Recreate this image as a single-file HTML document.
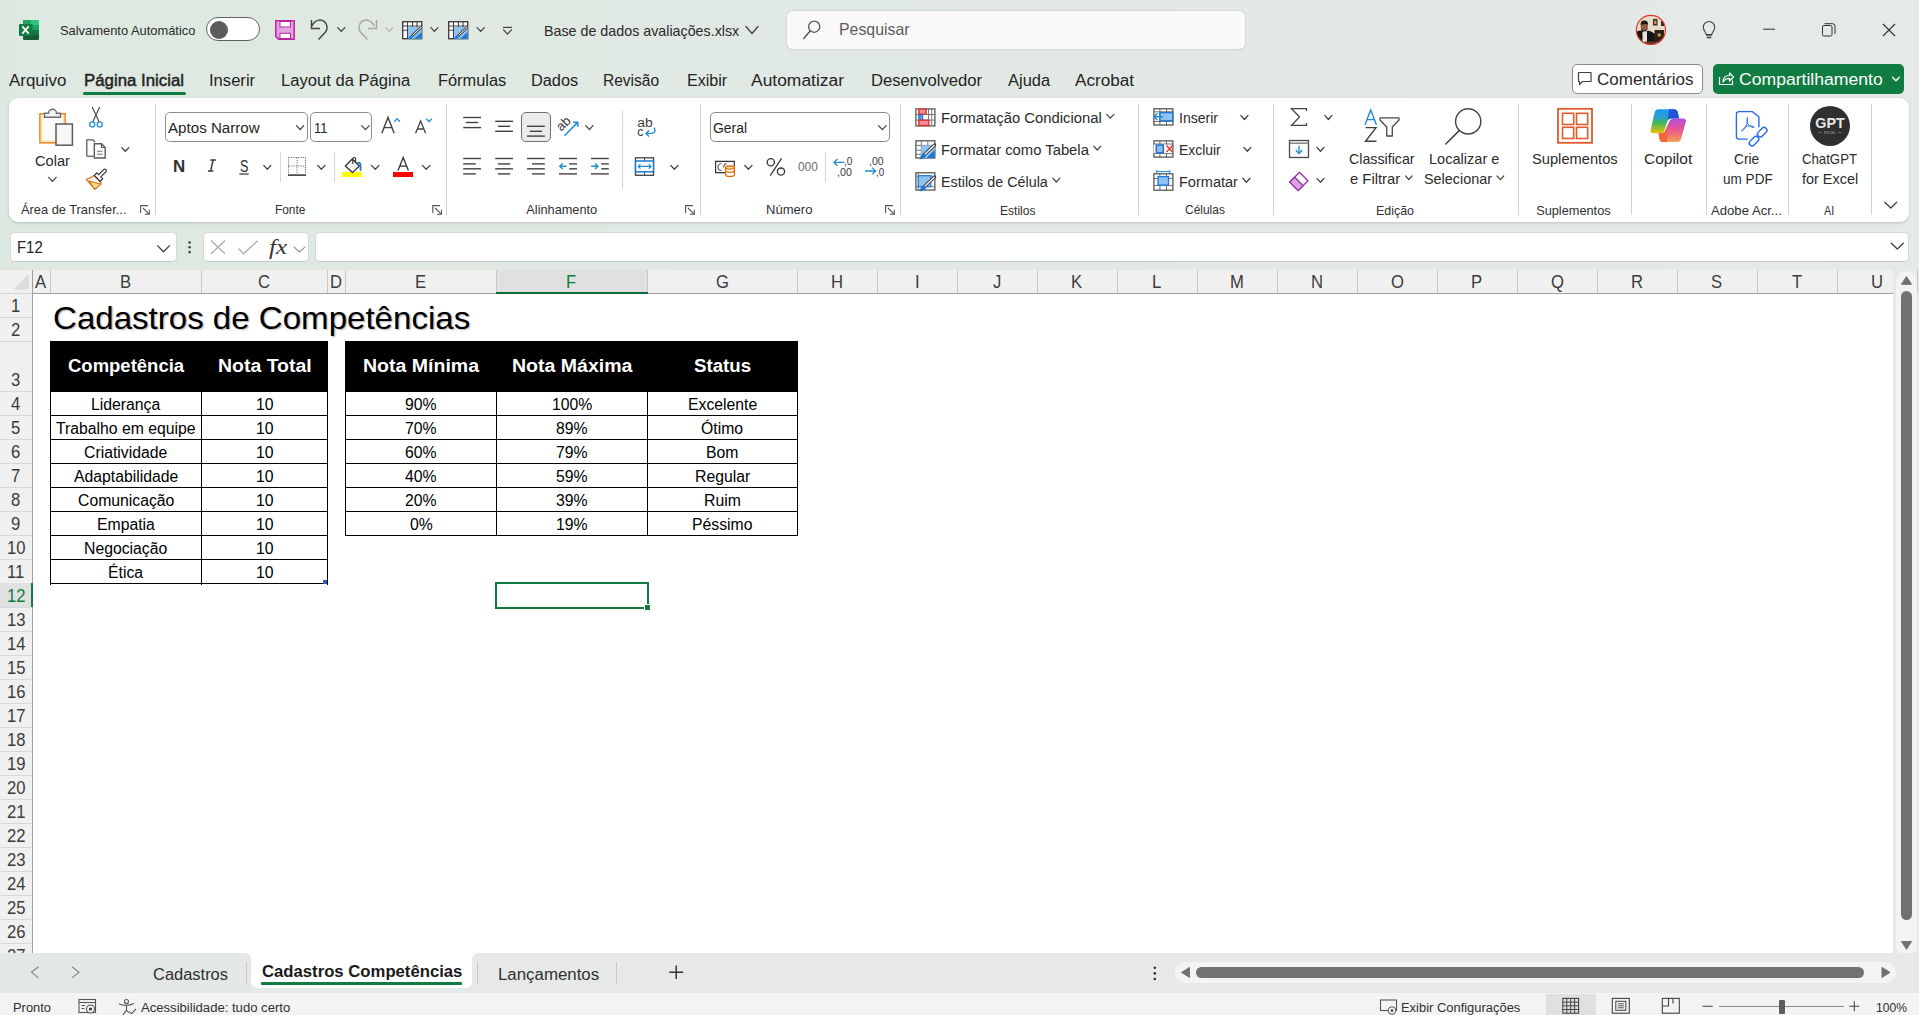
<!DOCTYPE html><html><head><meta charset="utf-8"><style>
html,body{margin:0;padding:0;}
body{width:1919px;height:1015px;position:relative;overflow:hidden;background:linear-gradient(90deg,#dde9e0 0%,#e0e9e3 35%,#e3e9e6 70%,#e5e9e8 100%);font-family:"Liberation Sans",sans-serif;}
.a{position:absolute;}
.t{position:absolute;white-space:pre;transform-origin:0 0;}
svg{overflow:visible}
</style></head><body>
<span class="t" style="left:60.40px;top:24.00px;font-size:13.3px;line-height:13.3px;color:#2b2b2b;transform:scaleX(0.9690);">Salvamento Automático</span>
<div class="a" style="left:206px;top:17px;width:54px;height:24px;box-sizing:border-box;border:1px solid #5f5f5f;border-radius:12px;background:#fff;"></div>
<div class="a" style="left:210px;top:20.5px;width:18px;height:18px;border-radius:50%;background:#5c5c5c;"></div>
<span class="t" style="left:543.75px;top:23.00px;font-size:15px;line-height:15px;color:#2b2b2b;transform:scaleX(0.9519);">Base de dados avaliações.xlsx</span>
<div class="a" style="left:787px;top:11px;width:458px;height:38px;box-sizing:border-box;background:#fafafa;border-radius:6px;box-shadow:0 0 0 1px #d6d9d8,0 1px 1px #c9cccb;"></div>
<span class="t" style="left:839.00px;top:21.00px;font-size:16.5px;line-height:16.5px;color:#5c5c5c;transform:scaleX(0.9622);">Pesquisar</span>
<span class="t" style="left:9.00px;top:73.00px;font-size:16px;line-height:16px;color:#242424;transform:scaleX(1.0579);">Arquivo</span>
<span class="t" style="left:83.60px;top:73.00px;font-size:16px;line-height:16px;color:#242424;transform:scaleX(1.0508);-webkit-text-stroke:0.45px #242424;">Página Inicial</span>
<span class="t" style="left:208.60px;top:73.00px;font-size:16px;line-height:16px;color:#242424;transform:scaleX(1.0372);">Inserir</span>
<span class="t" style="left:280.80px;top:73.00px;font-size:16px;line-height:16px;color:#242424;transform:scaleX(1.0373);">Layout da Página</span>
<span class="t" style="left:437.50px;top:73.00px;font-size:16px;line-height:16px;color:#242424;transform:scaleX(1.0242);">Fórmulas</span>
<span class="t" style="left:530.50px;top:73.00px;font-size:16px;line-height:16px;color:#242424;transform:scaleX(1.0204);">Dados</span>
<span class="t" style="left:603.40px;top:73.00px;font-size:16px;line-height:16px;color:#242424;transform:scaleX(0.9687);">Revisão</span>
<span class="t" style="left:686.70px;top:73.00px;font-size:16px;line-height:16px;color:#242424;transform:scaleX(1.0046);">Exibir</span>
<span class="t" style="left:751.40px;top:73.00px;font-size:16px;line-height:16px;color:#242424;transform:scaleX(1.0895);">Automatizar</span>
<span class="t" style="left:870.60px;top:73.00px;font-size:16px;line-height:16px;color:#242424;transform:scaleX(1.0401);">Desenvolvedor</span>
<span class="t" style="left:1007.70px;top:73.00px;font-size:16px;line-height:16px;color:#242424;transform:scaleX(1.0286);">Ajuda</span>
<span class="t" style="left:1075.30px;top:73.00px;font-size:16px;line-height:16px;color:#242424;transform:scaleX(1.0683);">Acrobat</span>
<div class="a" style="left:83px;top:92px;width:103px;height:3px;background:#107c41;border-radius:2px;"></div>
<div class="a" style="left:1572px;top:64px;width:131px;height:30px;box-sizing:border-box;border:1px solid #8a8a8a;border-radius:5px;background:#fff;"></div>
<span class="t" style="left:1597.40px;top:72.00px;font-size:16px;line-height:16px;color:#2b2b2b;transform:scaleX(1.0628);">Comentários</span>
<div class="a" style="left:1713px;top:64px;width:191px;height:30px;border-radius:5px;background:#107c41;"></div>
<span class="t" style="left:1739.00px;top:72.00px;font-size:16px;line-height:16px;color:#ffffff;transform:scaleX(1.0993);">Compartilhamento</span>
<div class="a" style="left:9px;top:98px;width:1900px;height:124px;background:#fff;border-radius:9px;box-shadow:0 1px 3px rgba(0,0,0,0.18);"></div>
<div class="a" style="left:154.5px;top:104px;width:1px;height:111px;background:#d1d1d1;"></div>
<div class="a" style="left:446.4px;top:104px;width:1px;height:111px;background:#d1d1d1;"></div>
<div class="a" style="left:699.6px;top:104px;width:1px;height:111px;background:#d1d1d1;"></div>
<div class="a" style="left:899.6px;top:104px;width:1px;height:111px;background:#d1d1d1;"></div>
<div class="a" style="left:1137.6px;top:104px;width:1px;height:111px;background:#d1d1d1;"></div>
<div class="a" style="left:1273.3px;top:104px;width:1px;height:111px;background:#d1d1d1;"></div>
<div class="a" style="left:1518.2px;top:104px;width:1px;height:111px;background:#d1d1d1;"></div>
<div class="a" style="left:1630.5px;top:104px;width:1px;height:111px;background:#d1d1d1;"></div>
<div class="a" style="left:1705.6px;top:104px;width:1px;height:111px;background:#d1d1d1;"></div>
<div class="a" style="left:1788.4px;top:104px;width:1px;height:111px;background:#d1d1d1;"></div>
<div class="a" style="left:1871.3px;top:104px;width:1px;height:111px;background:#d1d1d1;"></div>
<span class="t" style="left:20.50px;top:204.00px;font-size:12.75px;line-height:12.75px;color:#303030;transform:scaleX(1.0058);">Área de Transfer...</span>
<span class="t" style="left:274.80px;top:204.00px;font-size:12.75px;line-height:12.75px;color:#303030;transform:scaleX(0.9325);">Fonte</span>
<span class="t" style="left:526.30px;top:204.00px;font-size:12.75px;line-height:12.75px;color:#303030;">Alinhamento</span>
<span class="t" style="left:765.60px;top:204.00px;font-size:12.75px;line-height:12.75px;color:#303030;transform:scaleX(1.0231);">Número</span>
<span class="t" style="left:999.90px;top:205.00px;font-size:12.75px;line-height:12.75px;color:#303030;transform:scaleX(0.9454);">Estilos</span>
<span class="t" style="left:1184.70px;top:204.00px;font-size:12.75px;line-height:12.75px;color:#303030;transform:scaleX(0.9384);">Células</span>
<span class="t" style="left:1376.30px;top:205.00px;font-size:12.75px;line-height:12.75px;color:#303030;transform:scaleX(0.9746);">Edição</span>
<span class="t" style="left:1536.20px;top:205.00px;font-size:12.75px;line-height:12.75px;color:#303030;">Suplementos</span>
<span class="t" style="left:1710.60px;top:205.00px;font-size:12.75px;line-height:12.75px;color:#303030;transform:scaleX(1.0297);">Adobe Acr...</span>
<span class="t" style="left:1824.30px;top:205.00px;font-size:12.75px;line-height:12.75px;color:#303030;transform:scaleX(0.8466);">AI</span>
<span class="t" style="left:35.00px;top:153.00px;font-size:15.5px;line-height:15.5px;color:#2b2b2b;transform:scaleX(0.9448);">Colar</span>
<span class="t" style="left:1349.40px;top:151.00px;font-size:15px;line-height:15px;color:#2b2b2b;transform:scaleX(0.9483);">Classificar</span>
<span class="t" style="left:1350.00px;top:171.00px;font-size:15px;line-height:15px;color:#2b2b2b;transform:scaleX(0.9875);">e Filtrar</span>
<span class="t" style="left:1429.40px;top:151.00px;font-size:15px;line-height:15px;color:#2b2b2b;transform:scaleX(0.9705);">Localizar e</span>
<span class="t" style="left:1423.60px;top:171.00px;font-size:15px;line-height:15px;color:#2b2b2b;transform:scaleX(0.9594);">Selecionar</span>
<span class="t" style="left:1532.30px;top:151.00px;font-size:15px;line-height:15px;color:#2b2b2b;transform:scaleX(0.9788);">Suplementos</span>
<span class="t" style="left:1644.30px;top:151.00px;font-size:15px;line-height:15px;color:#2b2b2b;transform:scaleX(1.0322);">Copilot</span>
<span class="t" style="left:1734.20px;top:151.00px;font-size:15px;line-height:15px;color:#2b2b2b;transform:scaleX(0.9197);">Crie</span>
<span class="t" style="left:1722.60px;top:171.00px;font-size:15px;line-height:15px;color:#2b2b2b;transform:scaleX(0.9036);">um PDF</span>
<span class="t" style="left:1802.40px;top:151.00px;font-size:15px;line-height:15px;color:#2b2b2b;transform:scaleX(0.8797);">ChatGPT</span>
<span class="t" style="left:1802.40px;top:171.00px;font-size:15px;line-height:15px;color:#2b2b2b;transform:scaleX(0.9632);">for Excel</span>
<span class="t" style="left:940.60px;top:110.00px;font-size:15.5px;line-height:15.5px;color:#2b2b2b;transform:scaleX(0.9577);">Formatação Condicional</span>
<span class="t" style="left:940.60px;top:142.00px;font-size:15.5px;line-height:15.5px;color:#2b2b2b;transform:scaleX(0.9554);">Formatar como Tabela</span>
<span class="t" style="left:940.60px;top:174.00px;font-size:15.5px;line-height:15.5px;color:#2b2b2b;transform:scaleX(0.9250);">Estilos de Célula</span>
<span class="t" style="left:1178.75px;top:110.00px;font-size:15.5px;line-height:15.5px;color:#2b2b2b;transform:scaleX(0.9069);">Inserir</span>
<span class="t" style="left:1179.00px;top:142.00px;font-size:15.5px;line-height:15.5px;color:#2b2b2b;transform:scaleX(0.8965);">Excluir</span>
<span class="t" style="left:1179.00px;top:174.00px;font-size:15.5px;line-height:15.5px;color:#2b2b2b;transform:scaleX(0.9369);">Formatar</span>
<div class="a" style="left:165px;top:112px;width:143px;height:30px;box-sizing:border-box;border:1px solid #8d8d8d;border-radius:5px;background:#fff;"></div>
<div class="a" style="left:310px;top:112px;width:62px;height:30px;box-sizing:border-box;border:1px solid #8d8d8d;border-radius:5px;background:#fff;"></div>
<div class="a" style="left:710px;top:112px;width:180px;height:30px;box-sizing:border-box;border:1px solid #8d8d8d;border-radius:5px;background:#fff;"></div>
<span class="t" style="left:168.30px;top:120.00px;font-size:15.5px;line-height:15.5px;color:#242424;transform:scaleX(0.9763);">Aptos Narrow</span>
<span class="t" style="left:314.00px;top:120.00px;font-size:15.5px;line-height:15.5px;color:#242424;transform:scaleX(0.8329);">11</span>
<span class="t" style="left:713.20px;top:120.00px;font-size:15.5px;line-height:15.5px;color:#242424;transform:scaleX(0.8998);">Geral</span>
<div class="a" style="left:9.5px;top:232px;width:167px;height:30px;box-sizing:border-box;background:#fff;border-radius:5px;border:1px solid #d5d8d7;border-bottom-color:#c5c8c7;"></div>
<span class="t" style="left:16.80px;top:239.00px;font-size:16.5px;line-height:16.5px;color:#242424;transform:scaleX(0.9040);">F12</span>
<div class="a" style="left:202.5px;top:232px;width:106px;height:30px;box-sizing:border-box;background:#fff;border-radius:5px;border:1px solid #d5d8d7;border-bottom-color:#c5c8c7;"></div>
<div class="a" style="left:314.5px;top:232px;width:1594px;height:30px;box-sizing:border-box;background:#fff;border-radius:5px;border:1px solid #d5d8d7;border-bottom-color:#c5c8c7;"></div>
<div class="a" style="left:0px;top:270px;width:1893px;height:683px;background:#fff;"></div>
<div class="a" style="left:0px;top:270px;width:1893px;height:23px;background:#f0f0f0;"></div>
<div class="a" style="left:0px;top:293px;width:32px;height:660px;background:#f0f0f0;"></div>
<div class="a" style="left:0px;top:293px;width:32px;height:1px;background:#d4d4d4;"></div>
<div class="a" style="left:32px;top:293px;width:1861px;height:1px;background:#a0a0a0;"></div>
<div class="a" style="left:32px;top:270px;width:1px;height:683px;background:#a0a0a0;"></div>
<div class="a" style="left:496px;top:270px;width:151px;height:23px;background:#e0e0e0;"></div>
<div class="a" style="left:50px;top:270px;width:1px;height:23px;background:#c8c8c8;"></div>
<span class="t" style="left:35.45px;top:273.00px;font-size:18.5px;line-height:18.5px;color:#3c3c3c;transform:scaleX(0.9000);">A</span>
<div class="a" style="left:201px;top:270px;width:1px;height:23px;background:#c8c8c8;"></div>
<span class="t" style="left:119.95px;top:273.00px;font-size:18.5px;line-height:18.5px;color:#3c3c3c;transform:scaleX(0.9000);">B</span>
<div class="a" style="left:327px;top:270px;width:1px;height:23px;background:#c8c8c8;"></div>
<span class="t" style="left:257.99px;top:273.00px;font-size:18.5px;line-height:18.5px;color:#3c3c3c;transform:scaleX(0.9000);">C</span>
<div class="a" style="left:345px;top:270px;width:1px;height:23px;background:#c8c8c8;"></div>
<span class="t" style="left:329.99px;top:273.00px;font-size:18.5px;line-height:18.5px;color:#3c3c3c;transform:scaleX(0.9000);">D</span>
<div class="a" style="left:496px;top:270px;width:1px;height:23px;background:#c8c8c8;"></div>
<span class="t" style="left:414.95px;top:273.00px;font-size:18.5px;line-height:18.5px;color:#3c3c3c;transform:scaleX(0.9000);">E</span>
<div class="a" style="left:647px;top:270px;width:1px;height:23px;background:#c8c8c8;"></div>
<div class="a" style="left:496px;top:292px;width:152px;height:2px;background:#0e6b37;"></div>
<span class="t" style="left:566.41px;top:273.00px;font-size:18.5px;line-height:18.5px;color:#107c41;transform:scaleX(0.9000);">F</span>
<div class="a" style="left:797px;top:270px;width:1px;height:23px;background:#c8c8c8;"></div>
<span class="t" style="left:715.52px;top:273.00px;font-size:18.5px;line-height:18.5px;color:#3c3c3c;transform:scaleX(0.9000);">G</span>
<div class="a" style="left:877px;top:270px;width:1px;height:23px;background:#c8c8c8;"></div>
<span class="t" style="left:830.99px;top:273.00px;font-size:18.5px;line-height:18.5px;color:#3c3c3c;transform:scaleX(0.9000);">H</span>
<div class="a" style="left:957px;top:270px;width:1px;height:23px;background:#c8c8c8;"></div>
<span class="t" style="left:914.69px;top:273.00px;font-size:18.5px;line-height:18.5px;color:#3c3c3c;transform:scaleX(0.9000);">I</span>
<div class="a" style="left:1037px;top:270px;width:1px;height:23px;background:#c8c8c8;"></div>
<span class="t" style="left:992.84px;top:273.00px;font-size:18.5px;line-height:18.5px;color:#3c3c3c;transform:scaleX(0.9000);">J</span>
<div class="a" style="left:1117px;top:270px;width:1px;height:23px;background:#c8c8c8;"></div>
<span class="t" style="left:1071.45px;top:273.00px;font-size:18.5px;line-height:18.5px;color:#3c3c3c;transform:scaleX(0.9000);">K</span>
<div class="a" style="left:1197px;top:270px;width:1px;height:23px;background:#c8c8c8;"></div>
<span class="t" style="left:1152.37px;top:273.00px;font-size:18.5px;line-height:18.5px;color:#3c3c3c;transform:scaleX(0.9000);">L</span>
<div class="a" style="left:1277px;top:270px;width:1px;height:23px;background:#c8c8c8;"></div>
<span class="t" style="left:1230.07px;top:273.00px;font-size:18.5px;line-height:18.5px;color:#3c3c3c;transform:scaleX(0.9000);">M</span>
<div class="a" style="left:1357px;top:270px;width:1px;height:23px;background:#c8c8c8;"></div>
<span class="t" style="left:1310.99px;top:273.00px;font-size:18.5px;line-height:18.5px;color:#3c3c3c;transform:scaleX(0.9000);">N</span>
<div class="a" style="left:1437px;top:270px;width:1px;height:23px;background:#c8c8c8;"></div>
<span class="t" style="left:1390.52px;top:273.00px;font-size:18.5px;line-height:18.5px;color:#3c3c3c;transform:scaleX(0.9000);">O</span>
<div class="a" style="left:1517px;top:270px;width:1px;height:23px;background:#c8c8c8;"></div>
<span class="t" style="left:1471.45px;top:273.00px;font-size:18.5px;line-height:18.5px;color:#3c3c3c;transform:scaleX(0.9000);">P</span>
<div class="a" style="left:1597px;top:270px;width:1px;height:23px;background:#c8c8c8;"></div>
<span class="t" style="left:1550.52px;top:273.00px;font-size:18.5px;line-height:18.5px;color:#3c3c3c;transform:scaleX(0.9000);">Q</span>
<div class="a" style="left:1677px;top:270px;width:1px;height:23px;background:#c8c8c8;"></div>
<span class="t" style="left:1630.99px;top:273.00px;font-size:18.5px;line-height:18.5px;color:#3c3c3c;transform:scaleX(0.9000);">R</span>
<div class="a" style="left:1757px;top:270px;width:1px;height:23px;background:#c8c8c8;"></div>
<span class="t" style="left:1711.45px;top:273.00px;font-size:18.5px;line-height:18.5px;color:#3c3c3c;transform:scaleX(0.9000);">S</span>
<div class="a" style="left:1837px;top:270px;width:1px;height:23px;background:#c8c8c8;"></div>
<span class="t" style="left:1791.91px;top:273.00px;font-size:18.5px;line-height:18.5px;color:#3c3c3c;transform:scaleX(0.9000);">T</span>
<div class="a" style="left:1917px;top:270px;width:1px;height:23px;background:#c8c8c8;"></div>
<span class="t" style="left:1870.99px;top:273.00px;font-size:18.5px;line-height:18.5px;color:#3c3c3c;transform:scaleX(0.9000);">U</span>
<div class="a" style="left:0px;top:317px;width:32px;height:1px;background:#d8d8d8;"></div>
<span class="t" style="left:11.37px;top:297.00px;font-size:18.5px;line-height:18.5px;color:#3c3c3c;transform:scaleX(0.9000);">1</span>
<div class="a" style="left:0px;top:341px;width:32px;height:1px;background:#d8d8d8;"></div>
<span class="t" style="left:11.37px;top:321.00px;font-size:18.5px;line-height:18.5px;color:#3c3c3c;transform:scaleX(0.9000);">2</span>
<div class="a" style="left:0px;top:391px;width:32px;height:1px;background:#d8d8d8;"></div>
<span class="t" style="left:11.37px;top:371.00px;font-size:18.5px;line-height:18.5px;color:#3c3c3c;transform:scaleX(0.9000);">3</span>
<div class="a" style="left:0px;top:415px;width:32px;height:1px;background:#d8d8d8;"></div>
<span class="t" style="left:11.37px;top:395.00px;font-size:18.5px;line-height:18.5px;color:#3c3c3c;transform:scaleX(0.9000);">4</span>
<div class="a" style="left:0px;top:439px;width:32px;height:1px;background:#d8d8d8;"></div>
<span class="t" style="left:11.37px;top:419.00px;font-size:18.5px;line-height:18.5px;color:#3c3c3c;transform:scaleX(0.9000);">5</span>
<div class="a" style="left:0px;top:463px;width:32px;height:1px;background:#d8d8d8;"></div>
<span class="t" style="left:11.37px;top:443.00px;font-size:18.5px;line-height:18.5px;color:#3c3c3c;transform:scaleX(0.9000);">6</span>
<div class="a" style="left:0px;top:487px;width:32px;height:1px;background:#d8d8d8;"></div>
<span class="t" style="left:11.37px;top:467.00px;font-size:18.5px;line-height:18.5px;color:#3c3c3c;transform:scaleX(0.9000);">7</span>
<div class="a" style="left:0px;top:511px;width:32px;height:1px;background:#d8d8d8;"></div>
<span class="t" style="left:11.37px;top:491.00px;font-size:18.5px;line-height:18.5px;color:#3c3c3c;transform:scaleX(0.9000);">8</span>
<div class="a" style="left:0px;top:535px;width:32px;height:1px;background:#d8d8d8;"></div>
<span class="t" style="left:11.37px;top:515.00px;font-size:18.5px;line-height:18.5px;color:#3c3c3c;transform:scaleX(0.9000);">9</span>
<div class="a" style="left:0px;top:559px;width:32px;height:1px;background:#d8d8d8;"></div>
<span class="t" style="left:6.74px;top:539.00px;font-size:18.5px;line-height:18.5px;color:#3c3c3c;transform:scaleX(0.9000);">10</span>
<div class="a" style="left:0px;top:583px;width:32px;height:1px;background:#d8d8d8;"></div>
<span class="t" style="left:7.36px;top:563.00px;font-size:18.5px;line-height:18.5px;color:#3c3c3c;transform:scaleX(0.9000);">11</span>
<div class="a" style="left:0px;top:583px;width:32px;height:24px;background:#e0e0e0;"></div>
<div class="a" style="left:31px;top:583px;width:2px;height:24px;background:#107c41;"></div>
<div class="a" style="left:0px;top:607px;width:32px;height:1px;background:#d8d8d8;"></div>
<span class="t" style="left:6.74px;top:587.00px;font-size:18.5px;line-height:18.5px;color:#107c41;transform:scaleX(0.9000);">12</span>
<div class="a" style="left:0px;top:631px;width:32px;height:1px;background:#d8d8d8;"></div>
<span class="t" style="left:6.74px;top:611.00px;font-size:18.5px;line-height:18.5px;color:#3c3c3c;transform:scaleX(0.9000);">13</span>
<div class="a" style="left:0px;top:655px;width:32px;height:1px;background:#d8d8d8;"></div>
<span class="t" style="left:6.74px;top:635.00px;font-size:18.5px;line-height:18.5px;color:#3c3c3c;transform:scaleX(0.9000);">14</span>
<div class="a" style="left:0px;top:679px;width:32px;height:1px;background:#d8d8d8;"></div>
<span class="t" style="left:6.74px;top:659.00px;font-size:18.5px;line-height:18.5px;color:#3c3c3c;transform:scaleX(0.9000);">15</span>
<div class="a" style="left:0px;top:703px;width:32px;height:1px;background:#d8d8d8;"></div>
<span class="t" style="left:6.74px;top:683.00px;font-size:18.5px;line-height:18.5px;color:#3c3c3c;transform:scaleX(0.9000);">16</span>
<div class="a" style="left:0px;top:727px;width:32px;height:1px;background:#d8d8d8;"></div>
<span class="t" style="left:6.74px;top:707.00px;font-size:18.5px;line-height:18.5px;color:#3c3c3c;transform:scaleX(0.9000);">17</span>
<div class="a" style="left:0px;top:751px;width:32px;height:1px;background:#d8d8d8;"></div>
<span class="t" style="left:6.74px;top:731.00px;font-size:18.5px;line-height:18.5px;color:#3c3c3c;transform:scaleX(0.9000);">18</span>
<div class="a" style="left:0px;top:775px;width:32px;height:1px;background:#d8d8d8;"></div>
<span class="t" style="left:6.74px;top:755.00px;font-size:18.5px;line-height:18.5px;color:#3c3c3c;transform:scaleX(0.9000);">19</span>
<div class="a" style="left:0px;top:799px;width:32px;height:1px;background:#d8d8d8;"></div>
<span class="t" style="left:6.74px;top:779.00px;font-size:18.5px;line-height:18.5px;color:#3c3c3c;transform:scaleX(0.9000);">20</span>
<div class="a" style="left:0px;top:823px;width:32px;height:1px;background:#d8d8d8;"></div>
<span class="t" style="left:6.74px;top:803.00px;font-size:18.5px;line-height:18.5px;color:#3c3c3c;transform:scaleX(0.9000);">21</span>
<div class="a" style="left:0px;top:847px;width:32px;height:1px;background:#d8d8d8;"></div>
<span class="t" style="left:6.74px;top:827.00px;font-size:18.5px;line-height:18.5px;color:#3c3c3c;transform:scaleX(0.9000);">22</span>
<div class="a" style="left:0px;top:871px;width:32px;height:1px;background:#d8d8d8;"></div>
<span class="t" style="left:6.74px;top:851.00px;font-size:18.5px;line-height:18.5px;color:#3c3c3c;transform:scaleX(0.9000);">23</span>
<div class="a" style="left:0px;top:895px;width:32px;height:1px;background:#d8d8d8;"></div>
<span class="t" style="left:6.74px;top:875.00px;font-size:18.5px;line-height:18.5px;color:#3c3c3c;transform:scaleX(0.9000);">24</span>
<div class="a" style="left:0px;top:919px;width:32px;height:1px;background:#d8d8d8;"></div>
<span class="t" style="left:6.74px;top:899.00px;font-size:18.5px;line-height:18.5px;color:#3c3c3c;transform:scaleX(0.9000);">25</span>
<div class="a" style="left:0px;top:943px;width:32px;height:1px;background:#d8d8d8;"></div>
<span class="t" style="left:6.74px;top:923.00px;font-size:18.5px;line-height:18.5px;color:#3c3c3c;transform:scaleX(0.9000);">26</span>
<div class="a" style="left:0px;top:967px;width:32px;height:1px;background:#d8d8d8;"></div>
<span class="t" style="left:6.74px;top:947.00px;font-size:18.5px;line-height:18.5px;color:#3c3c3c;transform:scaleX(0.9000);">27</span>
<span class="t" style="left:53.30px;top:302.00px;font-size:32px;line-height:32px;color:#000;transform:scaleX(1.0332);text-shadow:1.2px 1.2px 1.5px rgba(0,0,0,0.3);">Cadastros de Competências</span>
<div class="a" style="left:50px;top:341px;width:278px;height:51px;background:#000;"></div>
<span class="t" style="left:67.80px;top:358.00px;font-size:17.5px;line-height:17.5px;color:#fff;font-weight:bold;transform:scaleX(1.0563);">Competência</span>
<span class="t" style="left:218.00px;top:358.00px;font-size:17.5px;line-height:17.5px;color:#fff;font-weight:bold;transform:scaleX(1.1122);">Nota Total</span>
<div class="a" style="left:345px;top:341px;width:453px;height:51px;background:#000;"></div>
<span class="t" style="left:362.90px;top:358.00px;font-size:17.5px;line-height:17.5px;color:#fff;font-weight:bold;transform:scaleX(1.1156);">Nota Mínima</span>
<span class="t" style="left:511.70px;top:358.00px;font-size:17.5px;line-height:17.5px;color:#fff;font-weight:bold;transform:scaleX(1.1160);">Nota Máxima</span>
<span class="t" style="left:694.30px;top:358.00px;font-size:17.5px;line-height:17.5px;color:#fff;font-weight:bold;transform:scaleX(1.0677);">Status</span>
<div class="a" style="left:50px;top:415px;width:278px;height:1px;background:#000;"></div>
<span class="t" style="left:91.38px;top:397.00px;font-size:16px;line-height:16px;color:#000;transform:scaleX(0.9850);">Liderança</span>
<span class="t" style="left:255.74px;top:397.00px;font-size:16px;line-height:16px;color:#000;transform:scaleX(0.9850);">10</span>
<div class="a" style="left:50px;top:439px;width:278px;height:1px;background:#000;"></div>
<span class="t" style="left:56.21px;top:421.00px;font-size:16px;line-height:16px;color:#000;transform:scaleX(0.9850);">Trabalho em equipe</span>
<span class="t" style="left:255.74px;top:421.00px;font-size:16px;line-height:16px;color:#000;transform:scaleX(0.9850);">10</span>
<div class="a" style="left:50px;top:463px;width:278px;height:1px;background:#000;"></div>
<span class="t" style="left:84.39px;top:445.00px;font-size:16px;line-height:16px;color:#000;transform:scaleX(0.9850);">Criatividade</span>
<span class="t" style="left:255.74px;top:445.00px;font-size:16px;line-height:16px;color:#000;transform:scaleX(0.9850);">10</span>
<div class="a" style="left:50px;top:487px;width:278px;height:1px;background:#000;"></div>
<span class="t" style="left:73.86px;top:469.00px;font-size:16px;line-height:16px;color:#000;transform:scaleX(0.9850);">Adaptabilidade</span>
<span class="t" style="left:255.74px;top:469.00px;font-size:16px;line-height:16px;color:#000;transform:scaleX(0.9850);">10</span>
<div class="a" style="left:50px;top:511px;width:278px;height:1px;background:#000;"></div>
<span class="t" style="left:77.82px;top:493.00px;font-size:16px;line-height:16px;color:#000;transform:scaleX(0.9850);">Comunicação</span>
<span class="t" style="left:255.74px;top:493.00px;font-size:16px;line-height:16px;color:#000;transform:scaleX(0.9850);">10</span>
<div class="a" style="left:50px;top:535px;width:278px;height:1px;background:#000;"></div>
<span class="t" style="left:97.09px;top:517.00px;font-size:16px;line-height:16px;color:#000;transform:scaleX(0.9850);">Empatia</span>
<span class="t" style="left:255.74px;top:517.00px;font-size:16px;line-height:16px;color:#000;transform:scaleX(0.9850);">10</span>
<div class="a" style="left:50px;top:559px;width:278px;height:1px;background:#000;"></div>
<span class="t" style="left:84.39px;top:541.00px;font-size:16px;line-height:16px;color:#000;transform:scaleX(0.9850);">Negociação</span>
<span class="t" style="left:255.74px;top:541.00px;font-size:16px;line-height:16px;color:#000;transform:scaleX(0.9850);">10</span>
<div class="a" style="left:50px;top:583px;width:278px;height:1px;background:#000;"></div>
<span class="t" style="left:108.47px;top:565.00px;font-size:16px;line-height:16px;color:#000;transform:scaleX(0.9850);">Ética</span>
<span class="t" style="left:255.74px;top:565.00px;font-size:16px;line-height:16px;color:#000;transform:scaleX(0.9850);">10</span>
<div class="a" style="left:50px;top:391px;width:1px;height:194px;background:#000;"></div>
<div class="a" style="left:201px;top:391px;width:1px;height:194px;background:#000;"></div>
<div class="a" style="left:327px;top:341px;width:1px;height:244px;background:#000;"></div>
<div class="a" style="left:323px;top:580px;width:4px;height:4px;background:#2f5fb3;"></div>
<div class="a" style="left:345px;top:415px;width:453px;height:1px;background:#000;"></div>
<span class="t" style="left:405.23px;top:397.00px;font-size:16px;line-height:16px;color:#000;transform:scaleX(0.9850);">90%</span>
<span class="t" style="left:551.84px;top:397.00px;font-size:16px;line-height:16px;color:#000;transform:scaleX(0.9850);">100%</span>
<span class="t" style="left:687.89px;top:397.00px;font-size:16px;line-height:16px;color:#000;transform:scaleX(0.9850);">Excelente</span>
<div class="a" style="left:345px;top:439px;width:453px;height:1px;background:#000;"></div>
<span class="t" style="left:405.23px;top:421.00px;font-size:16px;line-height:16px;color:#000;transform:scaleX(0.9850);">70%</span>
<span class="t" style="left:556.23px;top:421.00px;font-size:16px;line-height:16px;color:#000;transform:scaleX(0.9850);">89%</span>
<span class="t" style="left:701.48px;top:421.00px;font-size:16px;line-height:16px;color:#000;transform:scaleX(0.9850);">Ótimo</span>
<div class="a" style="left:345px;top:463px;width:453px;height:1px;background:#000;"></div>
<span class="t" style="left:405.23px;top:445.00px;font-size:16px;line-height:16px;color:#000;transform:scaleX(0.9850);">60%</span>
<span class="t" style="left:556.23px;top:445.00px;font-size:16px;line-height:16px;color:#000;transform:scaleX(0.9850);">79%</span>
<span class="t" style="left:706.30px;top:445.00px;font-size:16px;line-height:16px;color:#000;transform:scaleX(0.9850);">Bom</span>
<div class="a" style="left:345px;top:487px;width:453px;height:1px;background:#000;"></div>
<span class="t" style="left:405.23px;top:469.00px;font-size:16px;line-height:16px;color:#000;transform:scaleX(0.9850);">40%</span>
<span class="t" style="left:556.23px;top:469.00px;font-size:16px;line-height:16px;color:#000;transform:scaleX(0.9850);">59%</span>
<span class="t" style="left:694.90px;top:469.00px;font-size:16px;line-height:16px;color:#000;transform:scaleX(0.9850);">Regular</span>
<div class="a" style="left:345px;top:511px;width:453px;height:1px;background:#000;"></div>
<span class="t" style="left:405.23px;top:493.00px;font-size:16px;line-height:16px;color:#000;transform:scaleX(0.9850);">20%</span>
<span class="t" style="left:556.23px;top:493.00px;font-size:16px;line-height:16px;color:#000;transform:scaleX(0.9850);">39%</span>
<span class="t" style="left:704.11px;top:493.00px;font-size:16px;line-height:16px;color:#000;transform:scaleX(0.9850);">Ruim</span>
<div class="a" style="left:345px;top:535px;width:453px;height:1px;background:#000;"></div>
<span class="t" style="left:409.61px;top:517.00px;font-size:16px;line-height:16px;color:#000;transform:scaleX(0.9850);">0%</span>
<span class="t" style="left:556.23px;top:517.00px;font-size:16px;line-height:16px;color:#000;transform:scaleX(0.9850);">19%</span>
<span class="t" style="left:692.28px;top:517.00px;font-size:16px;line-height:16px;color:#000;transform:scaleX(0.9850);">Péssimo</span>
<div class="a" style="left:345px;top:391px;width:1px;height:145px;background:#000;"></div>
<div class="a" style="left:496px;top:391px;width:1px;height:145px;background:#000;"></div>
<div class="a" style="left:647px;top:391px;width:1px;height:145px;background:#000;"></div>
<div class="a" style="left:797px;top:391px;width:1px;height:145px;background:#000;"></div>
<div class="a" style="left:495px;top:582px;width:154px;height:27px;box-sizing:border-box;border:2px solid #107c41;"></div>
<div class="a" style="left:643.5px;top:603.5px;width:7px;height:7px;background:#fff;"></div>
<div class="a" style="left:644.5px;top:604.5px;width:5.5px;height:5.5px;background:#107c41;"></div>
<div class="a" style="left:1896px;top:271px;width:21px;height:685px;background:#f3f3f3;border-radius:10px;"></div>
<div class="a" style="left:1901px;top:291px;width:11px;height:629px;background:#717171;border-radius:6px;"></div>
<div class="a" style="left:230px;top:953px;width:270px;height:12px;background:#fff;"></div>
<div class="a" style="left:0px;top:953px;width:251px;height:40px;background:#e3e8e6;border-top-right-radius:6px;"></div>
<div class="a" style="left:472px;top:953px;width:1447px;height:40px;background:#e7e9e8;border-top-left-radius:6px;"></div>
<div class="a" style="left:251px;top:985px;width:221px;height:8px;background:#e5e9e7;"></div>
<div class="a" style="left:251px;top:953px;width:221px;height:35px;background:#fff;border-bottom-left-radius:6px;border-bottom-right-radius:6px;"></div>
<span class="t" style="left:152.50px;top:967.00px;font-size:16px;line-height:16px;color:#303030;transform:scaleX(1.0284);">Cadastros</span>
<span class="t" style="left:262.00px;top:963.00px;font-size:16.5px;line-height:16.5px;color:#1a1a1a;font-weight:bold;transform:scaleX(1.0118);">Cadastros Competências</span>
<div class="a" style="left:261px;top:982px;width:201px;height:2.5px;background:#107c41;border-radius:1px;"></div>
<span class="t" style="left:498.40px;top:967.00px;font-size:16px;line-height:16px;color:#303030;transform:scaleX(1.0524);">Lançamentos</span>
<div class="a" style="left:246px;top:962px;width:1px;height:22px;background:#c8c8c8;"></div>
<div class="a" style="left:477px;top:962px;width:1px;height:22px;background:#c8c8c8;"></div>
<div class="a" style="left:616px;top:962px;width:1px;height:22px;background:#c8c8c8;"></div>
<div class="a" style="left:1175px;top:962px;width:721px;height:21px;background:#f3f3f3;border-radius:10px;"></div>
<div class="a" style="left:1196px;top:967px;width:668px;height:11px;background:#717171;border-radius:6px;"></div>
<div class="a" style="left:0px;top:993px;width:1919px;height:22px;background:#f3f3f3;"></div>
<span class="t" style="left:13.30px;top:1002.00px;font-size:12.5px;line-height:12.5px;color:#303030;transform:scaleX(1.0319);">Pronto</span>
<span class="t" style="left:140.80px;top:1002.00px;font-size:12.5px;line-height:12.5px;color:#303030;transform:scaleX(1.0474);">Acessibilidade: tudo certo</span>
<span class="t" style="left:1400.90px;top:1002.00px;font-size:12.5px;line-height:12.5px;color:#303030;transform:scaleX(1.0344);">Exibir Configurações</span>
<div class="a" style="left:1546px;top:994px;width:50px;height:21px;background:#e0e0e0;"></div>
<span class="t" style="left:1876.40px;top:1002.00px;font-size:12.5px;line-height:12.5px;color:#303030;transform:scaleX(0.9664);">100%</span>
<div class="a" style="left:1719px;top:1006px;width:125px;height:1px;background:#8a8a8a;"></div>
<div class="a" style="left:1779px;top:1000px;width:6px;height:14px;background:#5e5e5e;border-radius:1px;"></div>
<span class="t" style="left:173.00px;top:158.00px;font-size:16.5px;line-height:16.5px;color:#303030;font-weight:bold;transform:scaleX(1.0241);">N</span>
<span class="t" style="left:239.80px;top:159.00px;font-size:16px;line-height:16px;color:#303030;transform:scaleX(0.7871);">S</span>
<div class="a" style="left:280px;top:152px;width:1px;height:30px;background:#d6d6d6;"></div>
<div class="a" style="left:334px;top:152px;width:1px;height:30px;background:#d6d6d6;"></div>
<div class="a" style="left:825px;top:152px;width:1px;height:30px;background:#d6d6d6;"></div>
<div class="a" style="left:342px;top:172px;width:20px;height:5px;background:#ffff00;"></div>
<div class="a" style="left:393px;top:172px;width:20px;height:5px;background:#ff0000;"></div>
<div class="a" style="left:521px;top:112px;width:30px;height:30px;box-sizing:border-box;background:#ebebeb;border:1px solid #707070;border-radius:5px;"></div>
<div class="a" style="left:622px;top:111px;width:1px;height:78px;background:#d6d6d6;"></div>
<span class="t" style="left:797.90px;top:161.00px;font-size:12.5px;line-height:12.5px;color:#6a6a6a;transform:scaleX(0.9448);">000</span>
<span class="t" style="left:843.60px;top:156.00px;font-size:11.5px;line-height:11.5px;color:#3a3a3a;transform:scaleX(0.8758);">,0</span>
<span class="t" style="left:837.20px;top:167.00px;font-size:11.5px;line-height:11.5px;color:#3a3a3a;transform:scaleX(0.9259);">,00</span>
<span class="t" style="left:869.40px;top:156.00px;font-size:11.5px;line-height:11.5px;color:#3a3a3a;transform:scaleX(0.9134);">,00</span>
<span class="t" style="left:875.80px;top:167.00px;font-size:11.5px;line-height:11.5px;color:#3a3a3a;transform:scaleX(0.8550);">,0</span>
<svg class="a" style="left:0;top:0" width="1919" height="1015"><path d="M13.6,289.8 L28.9,274.1 V289.8 Z" fill="#dcdcdc"/><rect x="23" y="20" width="16" height="20" rx="1.2" fill="#185c37"/><rect x="23" y="20" width="16" height="15" rx="1.2" fill="#107c41"/><rect x="23" y="20" width="16" height="10" fill="#21a366"/><rect x="31" y="20" width="8" height="5" fill="#33c481"/><rect x="19" y="24" width="13.5" height="12" rx="1" fill="#107c41"/><path d="M22.3,26.3 L28.7,33.7 M28.7,26.3 L22.3,33.7" stroke="#fff" stroke-width="1.8"/><path d="M275.8,20.8 H294.2 V39.2 H278.5 L275.8,36.5 Z" fill="#e3a3dc" stroke="#b9259e" stroke-width="1.5"/><rect x="280" y="21.5" width="10.5" height="5.5" fill="#fff" stroke="#b9259e" stroke-width="1"/><rect x="280" y="33.3" width="10.5" height="5.2" fill="#fff" stroke="#b9259e" stroke-width="1"/><path d="M318.5,39.5 L325.5,32 A7.2,7.2 0 0 0 314,22.8 L311.5,26" fill="none" stroke="#424242" stroke-width="1.4"/><path d="M311.5,20 V28.5 H320" fill="none" stroke="#424242" stroke-width="1.4"/><polyline points="337.7,27.6 341.29999999999995,31.4 344.9,27.6" fill="none" stroke="#424242" stroke-width="1.3" stroke-linecap="round" stroke-linejoin="round"/><path d="M367.5,39.5 L360.5,32 A7.2,7.2 0 0 1 372,22.8 L374.5,26" fill="none" stroke="#a6a6a6" stroke-width="1.4"/><path d="M376.5,20 V28.5 H368" fill="none" stroke="#a6a6a6" stroke-width="1.4"/><polyline points="386,27.6 389.35,31.4 392.7,27.6" fill="none" stroke="#b8b8b8" stroke-width="1.3" stroke-linecap="round" stroke-linejoin="round"/><g transform="translate(402,21)"><rect x="0.7" y="0.7" width="19" height="17" fill="#fff" stroke="#424242" stroke-width="1.4"/><path d="M0.7,5 H19.7 M0.7,9.3 H8 M5.5,0.7 V17.7 M10.5,0.7 V6 M15,0.7 V6" stroke="#424242" stroke-width="1.1"/><rect x="6" y="6" width="13.7" height="11.7" fill="#8fc3f2"/><path d="M19.7,11 V17.7 H12 Z" fill="#1f7ad1"/><path d="M19,6.5 L10,15" stroke="#424242" stroke-width="2.6"/><path d="M19,6.5 L10,15" stroke="#fff" stroke-width="1"/><path d="M10.5,14 Q7,14.5 6,18 Q9.5,18.5 11.5,15.5 Z" fill="#1f7ad1"/></g><polyline points="430.9,27.6 434.45,31.4 438,27.6" fill="none" stroke="#424242" stroke-width="1.3" stroke-linecap="round" stroke-linejoin="round"/><g transform="translate(448,21)"><rect x="0.7" y="0.7" width="19" height="17" fill="#fff" stroke="#424242" stroke-width="1.4"/><path d="M0.7,5 H19.7 M0.7,9.3 H8 M5.5,0.7 V17.7 M10.5,0.7 V6 M15,0.7 V6" stroke="#424242" stroke-width="1.1"/><rect x="6" y="6" width="13.7" height="11.7" fill="#8fc3f2"/><path d="M19.7,11 V17.7 H12 Z" fill="#1f7ad1"/><path d="M19,6.5 L10,15" stroke="#424242" stroke-width="2.6"/><path d="M19,6.5 L10,15" stroke="#fff" stroke-width="1"/><path d="M10.5,14 Q7,14.5 6,18 Q9.5,18.5 11.5,15.5 Z" fill="#1f7ad1"/></g><polyline points="477.1,27.6 480.70000000000005,31.4 484.3,27.6" fill="none" stroke="#424242" stroke-width="1.3" stroke-linecap="round" stroke-linejoin="round"/><path d="M503,27.4 H512" stroke="#424242" stroke-width="1.2"/><polyline points="503.6,29.8 507.5,34.2 511.4,29.8" fill="none" stroke="#424242" stroke-width="1.2" stroke-linecap="round" stroke-linejoin="round"/><polyline points="746,26.5 752.0,33.5 758,26.5" fill="none" stroke="#424242" stroke-width="1.3" stroke-linecap="round" stroke-linejoin="round"/><circle cx="814.2" cy="26.7" r="5.6" fill="none" stroke="#505050" stroke-width="1.3"/><path d="M810.3,30.8 L803.8,38.5" stroke="#505050" stroke-width="1.4" stroke-linecap="round"/><defs><clipPath id="av"><circle cx="1650.9" cy="29.9" r="14.6"/></clipPath></defs><g clip-path="url(#av)"><rect x="1636" y="14" width="30" height="32" fill="#e6dccb"/><rect x="1653" y="19" width="4.5" height="6.5" fill="#3a2c24"/><rect x="1654.2" y="20.5" width="2.2" height="3.5" fill="#c9a050"/><rect x="1661" y="21" width="3" height="5" fill="#2a2a2a"/><path d="M1636,46 V32 Q1638,30 1642,30.5 L1645,33 L1648,30.5 Q1652,31 1655,34 L1656,46 Z" fill="#141414"/><rect x="1642.5" y="32" width="4.5" height="12" fill="#e8e4dc"/><ellipse cx="1644.3" cy="26.5" rx="3.6" ry="4.3" fill="#8d5e45"/><path d="M1640.6,25 Q1640.5,20.5 1644.3,20.6 Q1648.2,20.5 1648,25 Q1646,22.8 1640.6,25 Z" fill="#1e1410"/><path d="M1641,28 Q1644.3,32.8 1647.6,28 Q1647,31.5 1644.3,31.6 Q1641.6,31.5 1641,28 Z" fill="#2a1a14"/><rect x="1654.5" y="30" width="9.5" height="12.5" fill="#2e2218"/><circle cx="1659.2" cy="35" r="1.8" fill="#c89a40"/><rect x="1645" y="41.5" width="10" height="5" fill="#5a3a28"/></g><circle cx="1650.9" cy="29.9" r="14.6" fill="none" stroke="#d93a2e" stroke-width="1.2"/><path d="M1706.2,34.5 C1706.2,32.5 1703.3,31 1703.3,27.2 A5.7,5.7 0 0 1 1714.7,27.2 C1714.7,31 1711.8,32.5 1711.8,34.5 Z" fill="none" stroke="#424242" stroke-width="1.1"/><path d="M1706.2,35.8 H1711.8 M1706.8,37.6 H1711.2" stroke="#424242" stroke-width="1.1"/><path d="M1763,29.2 H1775" stroke="#303030" stroke-width="1"/><rect x="1822.5" y="25.5" width="9.5" height="10.5" rx="1.5" fill="none" stroke="#303030" stroke-width="1"/><path d="M1824.5,23.7 H1832.5 A2.5,2.5 0 0 1 1835,26.2 V34" fill="none" stroke="#303030" stroke-width="1"/><path d="M1883,24 L1895,36 M1895,24 L1883,36" stroke="#303030" stroke-width="1.1"/><path d="M1578.5,72.5 H1591 V81.5 H1582.5 L1579.5,84.5 V81.5 H1578.5 Z" fill="none" stroke="#424242" stroke-width="1.2" stroke-linejoin="round"/><path d="M1719.5,77 V84.5 H1732.5 V80.5" fill="none" stroke="#fff" stroke-width="1.2"/><path d="M1723,82 C1723,77 1726,75.5 1729.5,75.5 V73 L1733.5,77 L1729.5,81 V78.3 C1726.5,78.3 1724.5,79.5 1723,82 Z" fill="none" stroke="#fff" stroke-width="1.2" stroke-linejoin="round"/><polyline points="1892.5,77.2 1895.9,80.8 1899.3,77.2" fill="none" stroke="#fff" stroke-width="1.3" stroke-linecap="round" stroke-linejoin="round"/><rect x="39.9" y="113.8" width="25.2" height="29" fill="#fafafa" stroke="#e8821e" stroke-width="1.5"/><path d="M41.5,115.5 V141.2 H55 M63.5,115.5 V123" fill="none" stroke="#ffe19a" stroke-width="1.3"/><path d="M44.5,117.2 V113.2 H48.5 A4,4 0 0 1 56.5,113.2 H60.5 V117.2 Z" fill="#f3f3f3" stroke="#6e6e6e" stroke-width="1.4"/><rect x="56" y="124" width="16.4" height="21.2" fill="#f7f7f7" stroke="#5c5c5c" stroke-width="1.5"/><polyline points="48.7,177.4 52.45,181.4 56.2,177.4" fill="none" stroke="#424242" stroke-width="1.3" stroke-linecap="round" stroke-linejoin="round"/><path d="M92.2,107 L99.2,122 M99.7,107 L92.7,122" stroke="#424242" stroke-width="1.1"/><circle cx="92.2" cy="124.4" r="2.5" fill="#fff" stroke="#1e8bd8" stroke-width="1.3"/><circle cx="99.7" cy="124.4" r="2.5" fill="#fff" stroke="#1e8bd8" stroke-width="1.3"/><path d="M86.8,156.2 V139.8 H93 L95,142 " fill="none" stroke="#5c5c5c" stroke-width="1.3"/><path d="M86.8,156.2 H93.5" stroke="#5c5c5c" stroke-width="1.3"/><path d="M94.3,143.7 H101.5 L105.2,147.5 V158 H94.3 Z" fill="#fafafa" stroke="#5c5c5c" stroke-width="1.4"/><path d="M101.5,143.7 V147.5 H105.2" fill="none" stroke="#5c5c5c" stroke-width="1.1"/><path d="M97,151.3 H102.5 M97,154.2 H102.5" stroke="#7a7a7a" stroke-width="1"/><polyline points="121.8,147.6 125.30000000000001,151.3 128.8,147.6" fill="none" stroke="#424242" stroke-width="1.3" stroke-linecap="round" stroke-linejoin="round"/><path d="M86.3,179.3 Q90.5,178.5 94.1,175.6 L101.3,182.9 Q98,186 94.7,189.2 Z" fill="#fafafa" stroke="#e0741c" stroke-width="1.3" stroke-linejoin="round"/><path d="M89,181 Q95,182.2 100.8,184.4 L94.7,189.2 Z" fill="#ffdf90" stroke="#e0741c" stroke-width="1.2" stroke-linejoin="round"/><path d="M94.3,175.4 L96.8,172.9 L98.6,174.7 L103.7,169.6 Q104.8,168.5 105.9,169.6 Q107,170.7 105.9,171.8 L100.8,176.9 L102.7,178.8 L100.2,181.3 Z" fill="#fafafa" stroke="#333" stroke-width="1.2" stroke-linejoin="round"/><path d="M140.6,213 V205.6 H148" fill="none" stroke="#555" stroke-width="1.1"/><path d="M143,208 L149.3,214.3 M149.3,209.8 V214.3 H144.8" fill="none" stroke="#555" stroke-width="1.1"/><path d="M432.8,213 V205.6 H440.2" fill="none" stroke="#555" stroke-width="1.1"/><path d="M435.2,208 L441.5,214.3 M441.5,209.8 V214.3 H437.0" fill="none" stroke="#555" stroke-width="1.1"/><path d="M685.6,213 V205.6 H693" fill="none" stroke="#555" stroke-width="1.1"/><path d="M688,208 L694.3,214.3 M694.3,209.8 V214.3 H689.8" fill="none" stroke="#555" stroke-width="1.1"/><path d="M885.6,213 V205.6 H893" fill="none" stroke="#555" stroke-width="1.1"/><path d="M888,208 L894.3,214.3 M894.3,209.8 V214.3 H889.8" fill="none" stroke="#555" stroke-width="1.1"/><polyline points="296.6,125.6 300.15,129.6 303.7,125.6" fill="none" stroke="#424242" stroke-width="1.3" stroke-linecap="round" stroke-linejoin="round"/><polyline points="361.7,125.6 365.45,129.6 369.2,125.6" fill="none" stroke="#424242" stroke-width="1.3" stroke-linecap="round" stroke-linejoin="round"/><path d="M381.8,133.3 L388,117.5 L394.2,133.3 M384,127.6 H392" fill="none" stroke="#424242" stroke-width="1.4"/><path d="M394.3,121.7 L397.1,118.6 L399.9,121.7" fill="none" stroke="#1e8bd8" stroke-width="1.3"/><path d="M415.6,133.3 L420.6,121 L425.6,133.3 M417.3,129 H423.9" fill="none" stroke="#424242" stroke-width="1.3"/><path d="M426.3,118.6 L429.1,121.7 L431.9,118.6" fill="none" stroke="#1e8bd8" stroke-width="1.3"/><path d="M210.4,159.9 H215.9 M207.9,171.1 H213.4 M213.1,159.9 L210.6,171.1" fill="none" stroke="#3a3a3a" stroke-width="1.5"/><path d="M239.3,174 H248.7" stroke="#424242" stroke-width="1.3"/><polyline points="263.8,165.4 267.35,169.2 270.9,165.4" fill="none" stroke="#424242" stroke-width="1.3" stroke-linecap="round" stroke-linejoin="round"/><rect x="288.5" y="157.5" width="17" height="17" fill="none" stroke="#6a6a6a" stroke-width="0.9" stroke-dasharray="1.3,1.1"/><path d="M297,157.5 V174.5 M288.5,166 H305.5" stroke="#6a6a6a" stroke-width="0.9" stroke-dasharray="1.3,1.1"/><path d="M288,175.2 H306" stroke="#424242" stroke-width="1.5"/><polyline points="317.7,165.4 321.35,169.2 325,165.4" fill="none" stroke="#424242" stroke-width="1.3" stroke-linecap="round" stroke-linejoin="round"/><path d="M345.3,166 L352.3,159 L359.3,166 L352.6,172.6 Z" fill="#f5f5f5" stroke="#333" stroke-width="1.3" stroke-linejoin="round"/><path d="M352.8,164 V158.5 A1.5,1.5 0 0 1 355.6,158.5 V163" fill="none" stroke="#333" stroke-width="1.1"/><path d="M358,162.8 Q360.5,162 360.5,165.5 V170" fill="none" stroke="#1e7ad1" stroke-width="1.8" stroke-linecap="round"/><polyline points="371.5,165.4 375.25,169.2 379,165.4" fill="none" stroke="#424242" stroke-width="1.3" stroke-linecap="round" stroke-linejoin="round"/><path d="M398,170.6 L403.2,157.6 L408.4,170.6 M399.8,166.2 H406.6" fill="none" stroke="#333" stroke-width="1.3"/><polyline points="422.4,165.4 426.2,169.2 430,165.4" fill="none" stroke="#424242" stroke-width="1.3" stroke-linecap="round" stroke-linejoin="round"/><path d="M463.2,117.5 H481" stroke="#424242" stroke-width="1.4"/><path d="M465.8,122.5 H478.2" stroke="#424242" stroke-width="1.4"/><path d="M463.2,127.6 H481" stroke="#424242" stroke-width="1.4"/><path d="M495.2,121.3 H513" stroke="#424242" stroke-width="1.4"/><path d="M498,126.3 H510.2" stroke="#424242" stroke-width="1.4"/><path d="M495.2,131.3 H513" stroke="#424242" stroke-width="1.4"/><path d="M527,126.3 H544.8" stroke="#424242" stroke-width="1.4"/><path d="M529.8,131.3 H542" stroke="#424242" stroke-width="1.4"/><path d="M527,136.1 H544.8" stroke="#424242" stroke-width="1.4"/><text x="0" y="0" transform="translate(561.3,131.8) rotate(-45)" font-family="Liberation Sans" font-size="13" fill="#3a3a3a">ab</text><path d="M564.5,135.7 L577.6,122.4 M573,122.2 H577.8 V127" fill="none" stroke="#1e8bd8" stroke-width="1.5"/><polyline points="585.8,125.6 589.4,129.6 593,125.6" fill="none" stroke="#424242" stroke-width="1.3" stroke-linecap="round" stroke-linejoin="round"/><path d="M463.2,158.5 H481" stroke="#424242" stroke-width="1.4"/><path d="M463.2,163.9 H475.8" stroke="#424242" stroke-width="1.4"/><path d="M463.2,168.8 H481" stroke="#424242" stroke-width="1.4"/><path d="M463.2,173.9 H475.8" stroke="#424242" stroke-width="1.4"/><path d="M495.2,158.5 H513" stroke="#424242" stroke-width="1.4"/><path d="M498,163.9 H510.2" stroke="#424242" stroke-width="1.4"/><path d="M495.2,168.8 H513" stroke="#424242" stroke-width="1.4"/><path d="M498,173.9 H510.2" stroke="#424242" stroke-width="1.4"/><path d="M527,158.5 H544.8" stroke="#424242" stroke-width="1.4"/><path d="M532,163.9 H544.8" stroke="#424242" stroke-width="1.4"/><path d="M527,168.8 H544.8" stroke="#424242" stroke-width="1.4"/><path d="M532,173.9 H544.8" stroke="#424242" stroke-width="1.4"/><path d="M559,158.5 H577" stroke="#424242" stroke-width="1.4"/><path d="M569.2,163.9 H577" stroke="#424242" stroke-width="1.4"/><path d="M569.2,168.8 H577" stroke="#424242" stroke-width="1.4"/><path d="M559,173.9 H577" stroke="#424242" stroke-width="1.4"/><path d="M566.5,166.2 H559.8 M562.6,163.4 L559.8,166.2 L562.6,169" fill="none" stroke="#1e8bd8" stroke-width="1.4"/><path d="M591,158.5 H608.8" stroke="#424242" stroke-width="1.4"/><path d="M601.2,163.9 H608.8" stroke="#424242" stroke-width="1.4"/><path d="M601.2,168.8 H608.8" stroke="#424242" stroke-width="1.4"/><path d="M591,173.9 H608.8" stroke="#424242" stroke-width="1.4"/><path d="M591.2,166.2 H597.9 M595.1,163.4 L597.9,166.2 L595.1,169" fill="none" stroke="#1e8bd8" stroke-width="1.4"/><text x="637.3" y="126.6" font-family="Liberation Sans" font-size="12.5" fill="#3a3a3a" textLength="15.5" lengthAdjust="spacingAndGlyphs">ab</text><text x="637.3" y="135.6" font-family="Liberation Sans" font-size="12.5" fill="#3a3a3a">c</text><path d="M654.2,127.6 Q657,133.2 650.5,133.4 H646 M649,130.4 L646,133.4 L649,136.4" fill="none" stroke="#1e8bd8" stroke-width="1.4"/><rect x="635.5" y="157.8" width="18" height="17.5" fill="#fff" stroke="#424242" stroke-width="1.3"/><path d="M644.5,157.8 V175.3" stroke="#424242" stroke-width="1"/><rect x="635.5" y="161" width="18" height="10.8" fill="#fff" stroke="#1e7ad1" stroke-width="1.5"/><path d="M638.2,166.4 H651 M640.5,164.1 L638.2,166.4 L640.5,168.7 M648.7,164.1 L651,166.4 L648.7,168.7" fill="none" stroke="#1e8bd8" stroke-width="1.2"/><polyline points="670.7,165.4 674.35,169.2 678,165.4" fill="none" stroke="#424242" stroke-width="1.3" stroke-linecap="round" stroke-linejoin="round"/><polyline points="878.5,125.6 882.35,129.6 886.2,125.6" fill="none" stroke="#424242" stroke-width="1.3" stroke-linecap="round" stroke-linejoin="round"/><path d="M725,172.7 H715.6 V161.3 H734.3 V166" fill="none" stroke="#333" stroke-width="1.2"/><path d="M721.5,163.5 Q718,163.8 718,167 Q718,170.3 721.5,170.5 M726.5,163.6 Q723.8,164 723.6,167.5" fill="none" stroke="#555" stroke-width="1.1"/><path d="M725.6,167.6 V174.8 Q725.6,176.5 730,176.5 Q734.4,176.5 734.4,174.8 V167.6" fill="#fff" stroke="#e36c0a" stroke-width="1.3"/><ellipse cx="730" cy="167.6" rx="4.4" ry="1.6" fill="#ffd9a0" stroke="#e36c0a" stroke-width="1.3"/><path d="M725.6,171.2 Q730,173.6 734.4,171.2" fill="none" stroke="#e36c0a" stroke-width="1.2"/><polyline points="744.7,165.4 748.35,169.2 752,165.4" fill="none" stroke="#424242" stroke-width="1.3" stroke-linecap="round" stroke-linejoin="round"/><circle cx="770.8" cy="162.3" r="3.6" fill="none" stroke="#3a3a3a" stroke-width="1.3"/><circle cx="781" cy="171.6" r="3.6" fill="none" stroke="#3a3a3a" stroke-width="1.3"/><path d="M770.2,175.6 L781.6,158.4" stroke="#3a3a3a" stroke-width="1.3"/><path d="M844.6,162.4 H834 M837.4,159 L834,162.4 L837.4,165.8" fill="none" stroke="#1e8bd8" stroke-width="1.3"/><path d="M865,171 H875.6 M872.2,167.6 L875.6,171 L872.2,174.4" fill="none" stroke="#1e8bd8" stroke-width="1.3"/><g transform="translate(915.3,108.3)"><rect x="0.6" y="0.6" width="19" height="17" fill="#fff" stroke="#4a4a4a" stroke-width="1.2"/><path d="M0.6,6.2 H19.6 M0.6,11.8 H19.6 M3.8,0.6 V17.6 M13.2,0.6 V17.6 M16.4,0.6 V17.6" stroke="#6a6a6a" stroke-width="0.9"/><rect x="3.6" y="0.8" width="7.2" height="5" fill="#f58b96" stroke="#d9302e" stroke-width="1.3"/><rect x="3.6" y="6.6" width="3.8" height="5" fill="#4aa0e6" stroke="#1e6fc4" stroke-width="1"/><rect x="3.6" y="11.9" width="10" height="5.4" fill="#f58b96" stroke="#d9302e" stroke-width="1.3"/></g><g transform="translate(915.3,140.2)"><rect x="0.6" y="0.6" width="19" height="17.2" fill="#fff" stroke="#4a4a4a" stroke-width="1.2"/><path d="M0.6,5.2 H19.6 M0.6,10 H6 M0.6,14.2 H6 M6,0.6 V17.8 M12.5,0.6 V5.2" stroke="#6a6a6a" stroke-width="0.9"/><rect x="6" y="5.2" width="13.6" height="12.6" fill="#8ec2f0"/><path d="M19.6,9.5 V17.8 H11 Z" fill="#1f78d1"/><path d="M19.3,4.8 L8.5,15" stroke="#3a3a3a" stroke-width="3.2" stroke-linecap="round"/><path d="M19.3,4.8 L8.5,15" stroke="#fafafa" stroke-width="1.3"/><path d="M9.6,13.6 Q5.5,13.6 4.2,19 Q9,19.2 11,15.6 Z" fill="#1f78d1"/></g><g transform="translate(915.3,172.2)"><rect x="0.6" y="0.6" width="19" height="17.2" fill="#fff" stroke="#4a4a4a" stroke-width="1.2"/><path d="M0.6,4 H19.6 M3,0.6 V17.8 M0.6,14.5 H19.6" stroke="#6a6a6a" stroke-width="0.9"/><rect x="3" y="3.5" width="12.5" height="11" fill="#8ec2f0" stroke="#1f78d1" stroke-width="1.2"/><path d="M19.3,4.8 L8.5,15" stroke="#3a3a3a" stroke-width="3.2" stroke-linecap="round"/><path d="M19.3,4.8 L8.5,15" stroke="#fafafa" stroke-width="1.3"/><path d="M9.6,13.6 Q5.5,13.6 4.2,19 Q9,19.2 11,15.6 Z" fill="#1f78d1"/></g><polyline points="1106.7,114.4 1110.3000000000002,118.2 1113.9,114.4" fill="none" stroke="#424242" stroke-width="1.2" stroke-linecap="round" stroke-linejoin="round"/><polyline points="1093.7,146.2 1097.25,150 1100.8,146.2" fill="none" stroke="#424242" stroke-width="1.2" stroke-linecap="round" stroke-linejoin="round"/><polyline points="1052.9,178.2 1056.35,182 1059.8,178.2" fill="none" stroke="#424242" stroke-width="1.2" stroke-linecap="round" stroke-linejoin="round"/><rect x="1153.8999999999999" y="108.8" width="19" height="16.2" fill="#fff" stroke="#4a4a4a" stroke-width="1.2"/><path d="M1159.8999999999999,108.2 V125.6 M1166.5,108.2 V125.6" stroke="#6a6a6a" stroke-width="1"/><path d="M1153.3,111.8 H1173.3 M1153.3,121.5 H1173.3" stroke="#6a6a6a" stroke-width="0.9"/><rect x="1160" y="112.6" width="12.8" height="8.2" fill="#8ec2f0" stroke="#1f78d1" stroke-width="1.4"/><path d="M1154.2,116.7 H1163 M1157.4,113.3 L1154.2,116.7 L1157.4,120.1" fill="none" stroke="#1e8bd8" stroke-width="1.5" stroke-linejoin="round"/><polyline points="1240.8,115.4 1244.4,119.5 1248,115.4" fill="none" stroke="#424242" stroke-width="1.3" stroke-linecap="round" stroke-linejoin="round"/><rect x="1153.8999999999999" y="140.9" width="19" height="16.2" fill="#fff" stroke="#4a4a4a" stroke-width="1.2"/><path d="M1159.8999999999999,140.3 V157.70000000000002 M1166.5,140.3 V157.70000000000002" stroke="#6a6a6a" stroke-width="1"/><path d="M1153.3,144 H1173.3 M1153.3,153.6 H1173.3" stroke="#6a6a6a" stroke-width="0.9"/><rect x="1153.5" y="144.6" width="13.5" height="8.5" fill="#fff" stroke="none"/><rect x="1156.3" y="145" width="7" height="7.8" fill="#8ec2f0" stroke="#1f6ec4" stroke-width="1.5"/><path d="M1166.5,145.5 L1172.5,152 M1172.5,145.5 L1166.5,152" stroke="#e5392b" stroke-width="1.4"/><polyline points="1243.8,147.4 1247.35,151.2 1250.9,147.4" fill="none" stroke="#424242" stroke-width="1.3" stroke-linecap="round" stroke-linejoin="round"/><rect x="1153.8999999999999" y="173.79999999999998" width="19" height="16.400000000000002" fill="#fff" stroke="#4a4a4a" stroke-width="1.2"/><path d="M1159.8999999999999,173.2 V190.79999999999998 M1166.5,173.2 V190.79999999999998" stroke="#6a6a6a" stroke-width="1"/><path d="M1153.3,178.5 H1173.3 M1153.3,185.5 H1173.3" stroke="#6a6a6a" stroke-width="0.9"/><rect x="1158" y="176.6" width="10.5" height="8.5" fill="#8ec2f0" stroke="#1f78d1" stroke-width="1.3"/><path d="M1156.7,171.6 H1169.8 M1156.7,170 V173.2 M1169.8,170 V173.2" stroke="#1e8bd8" stroke-width="1"/><polyline points="1242.8,178.3 1246.4,182.2 1250,178.3" fill="none" stroke="#424242" stroke-width="1.3" stroke-linecap="round" stroke-linejoin="round"/><path d="M1306.5,111 V108.6 H1291.6 L1299.5,117 L1291.6,125.4 H1306.5 V123" fill="none" stroke="#424242" stroke-width="1.3" stroke-linejoin="miter"/><polyline points="1324.8,115.4 1328.35,119.5 1331.9,115.4" fill="none" stroke="#424242" stroke-width="1.3" stroke-linecap="round" stroke-linejoin="round"/><rect x="1289.5" y="140.5" width="19" height="17" fill="#fafafa" stroke="#4a4a4a" stroke-width="1.3"/><path d="M1289.5,143.2 H1308.5" stroke="#777" stroke-width="1.3"/><path d="M1299,145.8 V153.5 M1295.8,150.3 L1299,153.5 L1302.2,150.3" fill="none" stroke="#1e8bd8" stroke-width="1.3"/><polyline points="1316.9,147.4 1320.45,151.2 1324,147.4" fill="none" stroke="#424242" stroke-width="1.3" stroke-linecap="round" stroke-linejoin="round"/><path d="M1299.5,172.3 L1308,180.8 L1298.2,190.6 L1289.7,182.1 Z" fill="#f8f8f8" stroke="#9b2fae" stroke-width="1.3" stroke-linejoin="round"/><path d="M1294.6,177.2 L1303.1,185.7 L1298.2,190.6 L1289.7,182.1 Z" fill="#d9a5dd" stroke="#9b2fae" stroke-width="1.3" stroke-linejoin="round"/><polyline points="1316.9,178.4 1320.45,182.2 1324,178.4" fill="none" stroke="#424242" stroke-width="1.3" stroke-linecap="round" stroke-linejoin="round"/><path d="M1365,124.7 L1370.7,109.9 L1376.4,124.7 M1367,119.6 H1374.4" fill="none" stroke="#1e8bd8" stroke-width="1.4"/><path d="M1365.5,127.6 H1376 L1365.5,141.2 H1376.5" fill="none" stroke="#424242" stroke-width="1.4"/><path d="M1380,117.8 H1399 V120 L1392.3,127 V136 H1386.7 V127 L1380,120 Z" fill="#fafafa" stroke="#4a4a4a" stroke-width="1.3" stroke-linejoin="round"/><polyline points="1405.7,176 1408.8000000000002,179.6 1411.9,176" fill="none" stroke="#424242" stroke-width="1.2" stroke-linecap="round" stroke-linejoin="round"/><circle cx="1468.2" cy="121.4" r="12.6" fill="none" stroke="#424242" stroke-width="1.4"/><path d="M1459.2,130.6 L1445.8,144" stroke="#424242" stroke-width="1.5" stroke-linecap="round"/><polyline points="1497,176 1500.4,179.6 1503.8,176" fill="none" stroke="#424242" stroke-width="1.2" stroke-linecap="round" stroke-linejoin="round"/><rect x="1558" y="108.8" width="34" height="34" fill="#fff" stroke="#e25a2c" stroke-width="1.8"/><rect x="1562.5" y="113.3" width="11.2" height="11.2" fill="none" stroke="#e25a2c" stroke-width="1.6"/><rect x="1576.5" y="113.3" width="11.2" height="11.2" fill="none" stroke="#e25a2c" stroke-width="1.6"/><rect x="1562.5" y="127.3" width="11.2" height="11.2" fill="none" stroke="#e25a2c" stroke-width="1.6"/><rect x="1576.5" y="127.3" width="11.2" height="11.2" fill="none" stroke="#e25a2c" stroke-width="1.6"/><defs><linearGradient id="cpA" x1="0" y1="0" x2="0" y2="1"><stop offset="0" stop-color="#1a9af0"/><stop offset="0.35" stop-color="#2c9fd0"/><stop offset="0.55" stop-color="#3cb85a"/><stop offset="1" stop-color="#eac30c"/></linearGradient><linearGradient id="cpB" x1="0" y1="0" x2="0" y2="1"><stop offset="0" stop-color="#b04ee0"/><stop offset="0.4" stop-color="#e4519a"/><stop offset="0.75" stop-color="#f07a70"/><stop offset="1" stop-color="#f6a55a"/></linearGradient></defs><path d="M1658,109.3 H1674 Q1677,109.3 1678,113 L1679,118.4 H1671 Q1668.5,118.4 1667.5,121 L1664.2,131 Q1663.4,133.2 1660.5,133.2 H1653.5 Q1650,133.2 1650.6,130 L1654.5,113 Q1655.5,109.3 1658,109.3 Z" fill="url(#cpA)"/><path d="M1669,109.3 H1674 Q1677,109.3 1678,113 L1679,118.4 H1671 Q1668.5,118.4 1667.8,120 Z" fill="#1d55d8"/><path d="M1675,118.4 H1683 Q1686.5,118.4 1685.8,122 L1681,139 Q1680,142.1 1677,142.1 H1663 Q1660,142.1 1659.5,139 L1658.5,133.2 H1661 Q1664.5,133.2 1665.5,130 L1669.5,121 Q1670.5,118.4 1675,118.4 Z" fill="url(#cpB)"/><path d="M1658.6,133.2 H1661 Q1664.5,133.2 1665.5,130 L1667.5,125.5 L1667,141.5 Q1664,142.1 1663,142.1 Q1660,142.1 1659.5,139 Z" fill="#f2643a"/><path d="M1747.6,139.1 H1739 A2.6,2.6 0 0 1 1736.4,136.5 V114.2 A2.6,2.6 0 0 1 1739,111.6 H1752.3 L1758.9,116.8 V127.3" fill="none" stroke="#2a6ae0" stroke-width="1.4" stroke-linejoin="round"/><path d="M1747.3,117.5 Q1748,124 1744.5,128.8 Q1741.5,132 1741.5,130.8 Q1742.5,129 1747,126 Q1750,125.5 1753.5,126.5 Q1755,127.8 1753,127.6 Q1749.5,127 1747.3,123 Z" fill="none" stroke="#2a6ae0" stroke-width="0.9" stroke-linejoin="round"/><rect x="1748.5" y="138.4" width="11" height="5.6" rx="2.8" transform="rotate(-45 1754 141.2)" fill="none" stroke="#2a6ae0" stroke-width="1.4"/><rect x="1756.7" y="129.4" width="11" height="5.6" rx="2.8" transform="rotate(-45 1762.2 132.2)" fill="none" stroke="#2a6ae0" stroke-width="1.4"/><circle cx="1830" cy="125.9" r="20" fill="#2f2f2f"/><text x="1830" y="128" text-anchor="middle" font-family="Liberation Sans" font-weight="bold" font-size="14" fill="#e8e8e8" textLength="29.5" lengthAdjust="spacingAndGlyphs">GPT</text><path d="M1818.5,132.5 H1822 M1838,132.5 H1841.5" stroke="#999" stroke-width="0.6"/><text x="1830" y="134" text-anchor="middle" font-family="Liberation Sans" font-size="3.6" fill="#aaa">EXCEL</text><polyline points="1884.8,202.2 1890.75,208 1896.7,202.2" fill="none" stroke="#424242" stroke-width="1.3" stroke-linecap="round" stroke-linejoin="round"/><polyline points="157.5,245.6 163.5,251.8 169.5,245.6" fill="none" stroke="#424242" stroke-width="1.3" stroke-linecap="round" stroke-linejoin="round"/><circle cx="189.6" cy="242.5" r="1.3" fill="#424242"/><circle cx="189.6" cy="247.3" r="1.3" fill="#424242"/><circle cx="189.6" cy="252.1" r="1.3" fill="#424242"/><path d="M211,240.5 L225,253.8 M225,240.5 L211,253.8" stroke="#a8a8a8" stroke-width="1.2"/><path d="M238.6,248.5 L243.5,253.8 L257.6,240.8" fill="none" stroke="#a8a8a8" stroke-width="1.2"/><text x="269" y="254" font-family="Liberation Serif" font-style="italic" font-size="20" fill="#333" textLength="18" lengthAdjust="spacingAndGlyphs">fx</text><polyline points="294,247 299.5,252 305,247" fill="none" stroke="#9a9a9a" stroke-width="1.1" stroke-linecap="round" stroke-linejoin="round"/><polyline points="1891.3,243.2 1897.3,249 1903.3,243.2" fill="none" stroke="#424242" stroke-width="1.3" stroke-linecap="round" stroke-linejoin="round"/><path d="M1906.5,276.5 L1911.5,284.3 H1901.5 Z" fill="#717171" stroke="#717171" stroke-width="1" stroke-linejoin="round"/><path d="M1906.5,949.3 L1911.5,941.5 H1901.5 Z" fill="#717171" stroke="#717171" stroke-width="1" stroke-linejoin="round"/><path d="M1181.5,972.4 L1189.5,967.4 V977.4 Z" fill="#717171" stroke="#717171" stroke-width="1" stroke-linejoin="round"/><path d="M1890,972.4 L1882,967.4 V977.4 Z" fill="#717171" stroke="#717171" stroke-width="1" stroke-linejoin="round"/><circle cx="1154.8" cy="967.8" r="1.3" fill="#333"/><circle cx="1154.8" cy="973.4" r="1.3" fill="#333"/><circle cx="1154.8" cy="979" r="1.3" fill="#333"/><path d="M38.5,966.7 L31.5,972.3 L38.5,977.9" fill="none" stroke="#8a8a8a" stroke-width="1.2"/><path d="M72,966.7 L79,972.3 L72,977.9" fill="none" stroke="#8a8a8a" stroke-width="1.2"/><path d="M676.2,965.4 V979 M669.3,972.2 H683.1" stroke="#333" stroke-width="1.5"/><rect x="79" y="999.5" width="16.5" height="13" fill="none" stroke="#555" stroke-width="1.1"/><path d="M79,1002.5 H95.5 M81.5,1005.5 H85 M81.5,1008.5 H84.5" stroke="#555" stroke-width="1"/><circle cx="90.5" cy="1009" r="4" fill="#f3f3f3" stroke="#555" stroke-width="1.1"/><circle cx="90.5" cy="1009" r="1.6" fill="#333"/><circle cx="126.5" cy="1001.5" r="2" fill="none" stroke="#555" stroke-width="1.1"/><path d="M119,1004 Q126.5,1007 134,1003.5 M126.5,1006 V1010 L123,1015 M126.5,1010 L129,1013" fill="none" stroke="#555" stroke-width="1.1"/><path d="M129.5,1011.5 L131.5,1013.8 L136,1009" fill="none" stroke="#555" stroke-width="1.1"/><rect x="1380.5" y="1000" width="16" height="10.5" fill="none" stroke="#555" stroke-width="1.1"/><circle cx="1392" cy="1010.5" r="3.8" fill="#f3f3f3" stroke="#555" stroke-width="1"/><circle cx="1392" cy="1010.5" r="1.3" fill="#333"/><rect x="1562.8" y="998.4" width="15.8" height="14.8" fill="none" stroke="#444" stroke-width="1.1"/><path d="M1566.8,998.4 V1013.2 M1570.7,998.4 V1013.2 M1574.6,998.4 V1013.2 M1562.8,1002.1 H1578.6 M1562.8,1005.8 H1578.6 M1562.8,1009.5 H1578.6" stroke="#444" stroke-width="1"/><rect x="1612.3" y="998.4" width="17" height="14.8" fill="none" stroke="#444" stroke-width="1.1"/><rect x="1615.8" y="1001.3" width="10" height="9" fill="none" stroke="#444" stroke-width="1"/><path d="M1617.8,1003.8 H1623.8 M1617.8,1005.8 H1623.8 M1617.8,1007.8 H1623.8" stroke="#444" stroke-width="0.9"/><rect x="1662.3" y="998.4" width="17" height="14.8" fill="none" stroke="#444" stroke-width="1.1"/><path d="M1662.3,1006 H1668.5 V998.4 M1673,998.4 V1003.5" fill="none" stroke="#444" stroke-width="1.1"/><path d="M1702.5,1006.3 H1712.8 M1849.3,1006.3 H1859.3 M1854.3,1001.3 V1011.3" stroke="#444" stroke-width="1.1"/></svg>
</body></html>
